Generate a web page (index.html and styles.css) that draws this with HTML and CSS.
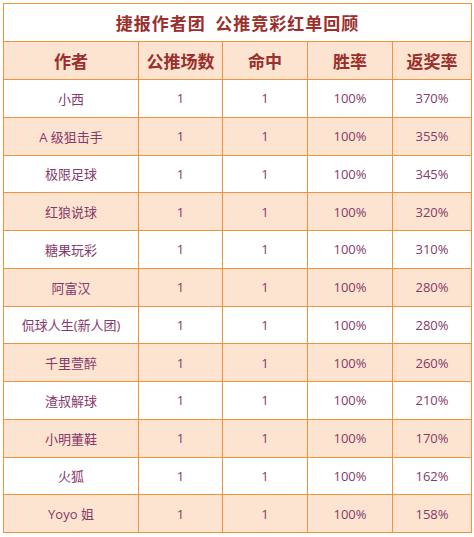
FILE: index.html
```html
<!DOCTYPE html>
<html lang="zh">
<head>
<meta charset="utf-8">
<link rel="stylesheet" href="styles.css">
</head>
<body>
<table class="board">
  <colgroup>
    <col class="c1"><col class="c2"><col class="c3"><col class="c4"><col class="c5">
  </colgroup>
  <thead>
    <tr class="title-row"><th colspan="5">捷报作者团&nbsp; 公推竞彩红单回顾</th></tr>
    <tr class="head-row"><th>作者</th><th>公推场数</th><th>命中</th><th>胜率</th><th>返奖率</th></tr>
  </thead>
  <tbody>
    <tr><td>小西</td><td>1</td><td>1</td><td>100%</td><td>370%</td></tr>
    <tr class="alt"><td>A 级狙击手</td><td>1</td><td>1</td><td>100%</td><td>355%</td></tr>
    <tr><td>极限足球</td><td>1</td><td>1</td><td>100%</td><td>345%</td></tr>
    <tr class="alt"><td>红狼说球</td><td>1</td><td>1</td><td>100%</td><td>320%</td></tr>
    <tr><td>糖果玩彩</td><td>1</td><td>1</td><td>100%</td><td>310%</td></tr>
    <tr class="alt"><td>阿富汉</td><td>1</td><td>1</td><td>100%</td><td>280%</td></tr>
    <tr><td>侃球人生(新人团)</td><td>1</td><td>1</td><td>100%</td><td>280%</td></tr>
    <tr class="alt"><td>千里萱醉</td><td>1</td><td>1</td><td>100%</td><td>260%</td></tr>
    <tr><td>渣叔解球</td><td>1</td><td>1</td><td>100%</td><td>210%</td></tr>
    <tr class="alt"><td>小明董鞋</td><td>1</td><td>1</td><td>100%</td><td>170%</td></tr>
    <tr><td>火狐</td><td>1</td><td>1</td><td>100%</td><td>162%</td></tr>
    <tr class="alt"><td>Yoyo 姐</td><td>1</td><td>1</td><td>100%</td><td>158%</td></tr>
  </tbody>
</table>
</body>
</html>
```

FILE: styles.css
```css
html, body {
  margin: 0;
  padding: 0;
  background: #ffffff;
}
body {
  padding: 3px;
  font-family: "Open Sans", "Noto Sans CJK SC", sans-serif;
}
.board {
  border-collapse: collapse;
  table-layout: fixed;
  width: 469px;
}
.c1 { width: 135px; }
.c2 { width: 84px; }
.c3 { width: 85px; }
.c4 { width: 85px; }
.c5 { width: 79px; }
.board th, .board td {
  border: 1px solid #f0923e;
  text-align: center;
  padding: 0;
}
.title-row th {
  height: 37px;
  background: #ffffff;
  color: #9a2f2c;
  font-size: 17px;
  font-weight: bold;
  letter-spacing: 1px;
  font-family: "Noto Sans CJK SC", sans-serif;
}
.head-row th {
  height: 37px;
  background: #fde4d1;
  color: #9a2f2c;
  font-size: 17px;
  font-weight: bold;
  font-family: "Noto Sans CJK SC", sans-serif;
}
.board td {
  height: 36.75px;
  color: #86396a;
  font-size: 13px;
  background: #ffffff;
}
.board tr.alt td {
  background: #fde4d1;
}
```
